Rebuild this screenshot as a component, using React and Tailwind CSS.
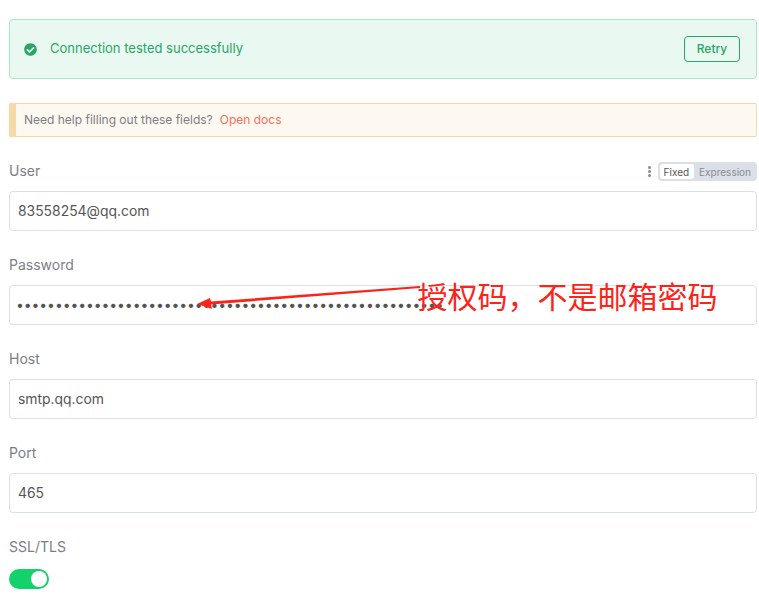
import React from 'react';

const inter = { fontFamily: 'Inter, sans-serif' };

const inputClass =
  'block h-[40px] w-full rounded-[4px] border border-[#dbdfe7] bg-white pb-[1px] pr-2 text-[#555555] outline-none';

const Field = ({ label, value, type = 'text', className = 'pl-2 text-[13.9px]' }) => (
  <div className="mb-[22px]">
    <div className="h-[32px] text-sm leading-[24px] text-[#7d7d87]">{label}</div>
    <input readOnly type={type} value={value} className={`${inputClass} ${className}`} />
  </div>
);

const CheckCircle = () => (
  <svg width="13" height="13" viewBox="0 0 512 512" className="text-[#29a568]">
    <path
      fill="currentColor"
      d="M504 256c0 137-111 248-248 248S8 393 8 256 119 8 256 8s248 111 248 248zM227.3 387.3l184-184c6.2-6.2 6.2-16.4 0-22.6l-22.6-22.6c-6.2-6.2-16.4-6.2-22.6 0L216 308.1l-70.1-70.1c-6.2-6.2-16.4-6.2-22.6 0l-22.6 22.6c-6.2 6.2-6.2 16.4 0 22.6l104 104c6.2 6.2 16.4 6.2 22.6 0z"
    />
  </svg>
);

export default function App() {
  return (
    <div style={inter} className="relative h-[609px] w-[759px] overflow-hidden bg-white pl-[9px] pr-[2px] pt-[19px]">
      {/* Test result banner */}
      <div className="flex h-[60px] items-center justify-between rounded-[4px] border border-[#a8e8c6] bg-[#e9f8f0] pl-[14px] pr-4">
        <div className="flex items-center gap-[13px] text-[13px] text-[#29a568]">
          <CheckCircle />
          <span>Connection tested successfully</span>
        </div>
        <button className="h-[26px] w-[56px] rounded-[4px] border border-[#29a568] text-xs font-[450] text-[#29a568]">
          Retry
        </button>
      </div>

      {/* Docs hint */}
      <div className="mt-6 flex h-[34px] items-center rounded-[2px] border border-l-[7px] border-[#f5d9a8] bg-[#fdf8f0] pl-2 text-xs text-[#7d7d87]">
        Need help filling out these fields?
        <span className="ml-[7px] text-[#ff6d5a]">Open docs</span>
      </div>

      {/* User field has the fixed / expression switch */}
      <div className="mb-[22px] mt-[22px]">
        <div className="flex h-[32px] items-start justify-between">
          <span className="text-sm leading-[24px] text-[#7d7d87]">User</span>
          <div className="mt-[3px] flex items-center gap-[7px]">
            <div className="flex flex-col gap-[1px]">
              <span className="h-[3px] w-[3px] rounded-full bg-[#8a8a94]" />
              <span className="h-[3px] w-[3px] rounded-full bg-[#8a8a94]" />
              <span className="h-[3px] w-[3px] rounded-full bg-[#8a8a94]" />
            </div>
            <div className="flex h-[19px] items-center rounded-[4px] bg-[#dbdfe7] py-[2px] pl-[2px] pr-[1px] text-[10px]">
              <span className="flex h-[15px] items-center rounded-[3px] bg-white pl-[4px] pr-[5px] pt-[1px] text-[#555555]">Fixed</span>
              <span className="px-[5px] pt-[1px] text-[#8a8a94]">Expression</span>
            </div>
          </div>
        </div>
        <input readOnly value="83558254@qq.com" className={`${inputClass} pl-2 text-[13.9px]`} />
      </div>

      <Field label="Password" value={'x'.repeat(55)} type="password" className="pl-[6px] text-sm tracking-[-0.1px]" />
      <Field label="Host" value="smtp.qq.com" />
      <Field label="Port" value="465" />

      <div className="h-[34px] text-sm leading-[24px] text-[#7d7d87]">SSL/TLS</div>
      <div className="flex h-[20px] w-[40px] items-center justify-end rounded-full bg-[#13d26b] pr-[2px]">
        <span className="h-4 w-4 rounded-full bg-white" />
      </div>

      {/* Red annotation pasted over the screenshot */}
      <svg width="759" height="609" className="pointer-events-none absolute left-0 top-0">
        <path d="M420 286 L420 288 L211 304.5 L212 309 L197 304 L210 298 L211 301.5 Z" fill="#fb2419" />
      </svg>
      <div
        style={{ fontFamily: '"Noto Sans CJK SC", sans-serif' }}
        className="absolute left-[417.5px] top-[274px] text-[30px] leading-[42px] whitespace-nowrap text-[#fb2419]"
      >
        授权码，不是邮箱密码
      </div>
    </div>
  );
}
